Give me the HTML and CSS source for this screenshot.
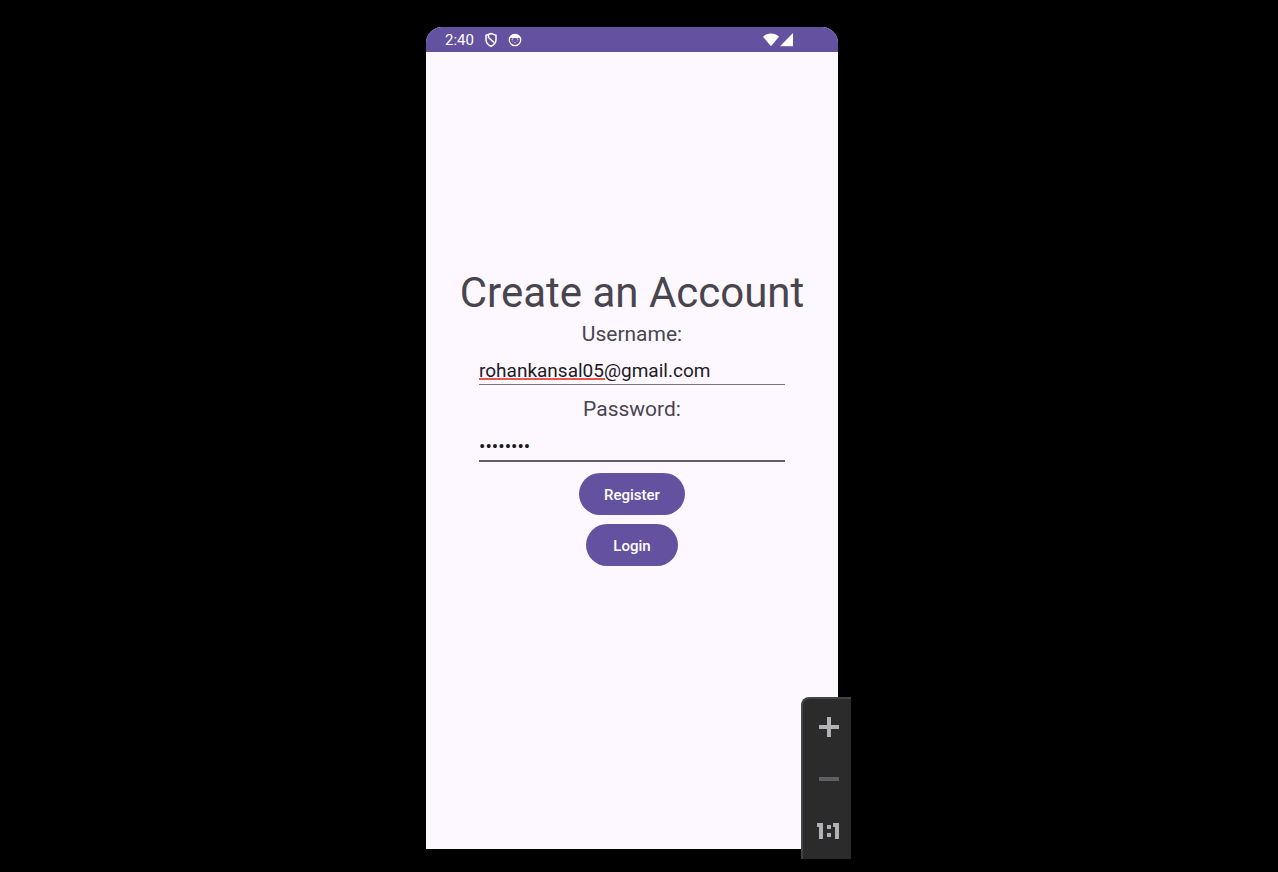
FILE: index.html
```html
<!DOCTYPE html>
<html lang="en">
<head>
<meta charset="utf-8">
<meta name="viewport" content="width=device-width, initial-scale=1">
<title>Create an Account</title>
<link rel="stylesheet" href="styles.css">
</head>
<body>
<div class="emulator">
  <div class="phone">
    <header class="status">
      <span class="clock">2:40</span>
      <svg class="status-icon" width="14" height="16" viewBox="0 0 14 16" fill="none" stroke="#fff" stroke-width="1.5" aria-hidden="true">
        <path d="M7 1.500 12 3.200V7.500C12 10.600 9.800 13 7 14.300 4.200 13 2 10.600 2 7.500V3.200Z"/>
        <path d="M4.500 2.500V5.500L10 10.500"/>
      </svg>
      <svg class="status-icon" width="14" height="14" viewBox="0 0 14 14" aria-hidden="true">
        <circle cx="7" cy="7" r="5.700" fill="none" stroke="#fff" stroke-width="1.300"/>
        <path d="M1.300 5.500C2 2.700 4.300 1.200 7 1.200S12 2.700 12.700 5.500L11 4.500 9.500 5.500 7 4.800 4.500 5.500 3 4.500Z" fill="#fff"/>
        <path d="M3.500 6.500h1.500M9 6.500h1.500M4.300 8h1M8.700 8h1M6.200 9.500h1.600" stroke="#b5abd4" stroke-width="1"/>
      </svg>
      <svg class="signal" width="31" height="14" viewBox="0 0 31 14" fill="#fff" aria-hidden="true">
        <path d="M0 3.700C4.300-.5 11.700-.5 16 3.700L8 13.200Z"/>
        <path d="M17 13.200 30 0V13.200Z"/>
      </svg>
    </header>
    <main class="screen">
      <h1 class="title">Create an Account</h1>
      <form class="form">
        <label class="label" for="username">Username:</label>
        <input class="field field-marked" id="username" type="text" value="rohankansal05@gmail.com" spellcheck="false">
        <label class="label label-next" for="password">Password:</label>
        <input class="field field-active" id="password" type="password" value="password">
        <button class="button" type="submit">Register</button>
        <button class="button" type="button">Login</button>
      </form>
    </main>
  </div>
  <div class="zoom-bar">
    <button class="zoom-button" type="button" aria-label="Zoom in">
      <svg width="20" height="20" viewBox="0 0 20 20" fill="#afb1b3"><path d="M8 0h4v8h8v4h-8v8H8v-8H0V8h8Z"/></svg>
    </button>
    <button class="zoom-button" type="button" aria-label="Zoom out" disabled>
      <svg width="20" height="4" viewBox="0 0 20 4" fill="#5e5f60"><path d="M0 0h20v4H0Z"/></svg>
    </button>
    <button class="zoom-button" type="button" aria-label="Actual size">
      <svg width="24" height="16" viewBox="0 0 24 16" fill="#afb1b3"><path d="M0 0h6v16H2V4H0ZM10 2h4v4h-4ZM10 10h4v4h-4ZM16 0h6v16h-4V4h-2Z"/></svg>
    </button>
  </div>
</div>
</body>
</html>
```
FILE: styles.css
```css
* {
  box-sizing: border-box;
}

body {
  margin: 0;
  min-height: 100vh;
  display: flex;
  justify-content: center;
  background: #000;
  font-family: Roboto, sans-serif;
}

.emulator {
  position: relative;
  display: flex;
  width: 100%;
  max-width: 426px;
  padding: 27px 14px 23px 0;
}

.phone {
  flex: 1;
  display: flex;
  flex-direction: column;
  overflow: hidden;
  border-radius: 16px 16px 0 0;
  background: #fdf8ff;
}

.status {
  display: flex;
  align-items: center;
  height: 25px;
  padding: 0 44px 0 19px;
  background: #64519f;
  color: #fff;
}

.clock {
  padding-top: 1px;
  font-size: 15px;
  line-height: 24px;
}

.status-icon {
  margin-left: 10px;
}

.signal {
  margin-left: auto;
}

.screen {
  flex: 1;
  display: flex;
  flex-direction: column;
  align-items: center;
  justify-content: center;
  padding-bottom: 67px;
}

.title {
  margin: 0;
  color: #49454e;
  font-size: 42px;
  font-weight: 400;
  line-height: 50px;
  white-space: nowrap;
}

.form {
  display: flex;
  flex-direction: column;
  align-items: center;
  width: 100%;
  padding: 0 53px;
}

.label {
  color: #49454e;
  font-size: 21px;
  line-height: 32px;
}

.label-next {
  margin-top: 8px;
}

.field {
  width: 100%;
  height: 35px;
  padding: 7px 0 0;
  border: 0;
  border-bottom: 1px solid #79747e;
  border-radius: 0;
  outline: 0;
  background: transparent;
  color: #1c1b1f;
  font-family: inherit;
  font-size: 19px;
  line-height: 24px;
}

.field-marked {
  background: linear-gradient(#e8554e, #e8554e) 0 28px / 126px 2px no-repeat;
}

.field-active {
  height: 37px;
  margin-bottom: 11px;
  border-bottom: 2px solid #625b71;
}

.button {
  min-width: 92px;
  height: 42px;
  padding: 1px 25px 0;
  border: 0;
  border-radius: 21px;
  background: #64519f;
  color: #fff;
  font-family: inherit;
  font-size: 15px;
  font-weight: 500;
}

.button + .button {
  margin-top: 9px;
}

.zoom-bar {
  position: absolute;
  right: 1px;
  bottom: 13px;
  display: flex;
  flex-direction: column;
  width: 50px;
  padding: 2px 0;
  border: solid #434445;
  border-width: 2px 0 0 2px;
  border-radius: 8px 0 0 0;
  background: #2b2b2b;
}

.zoom-button {
  display: flex;
  align-items: center;
  justify-content: center;
  height: 52px;
  padding: 0 0 0 4px;
  border: 0;
  background: transparent;
}
```
